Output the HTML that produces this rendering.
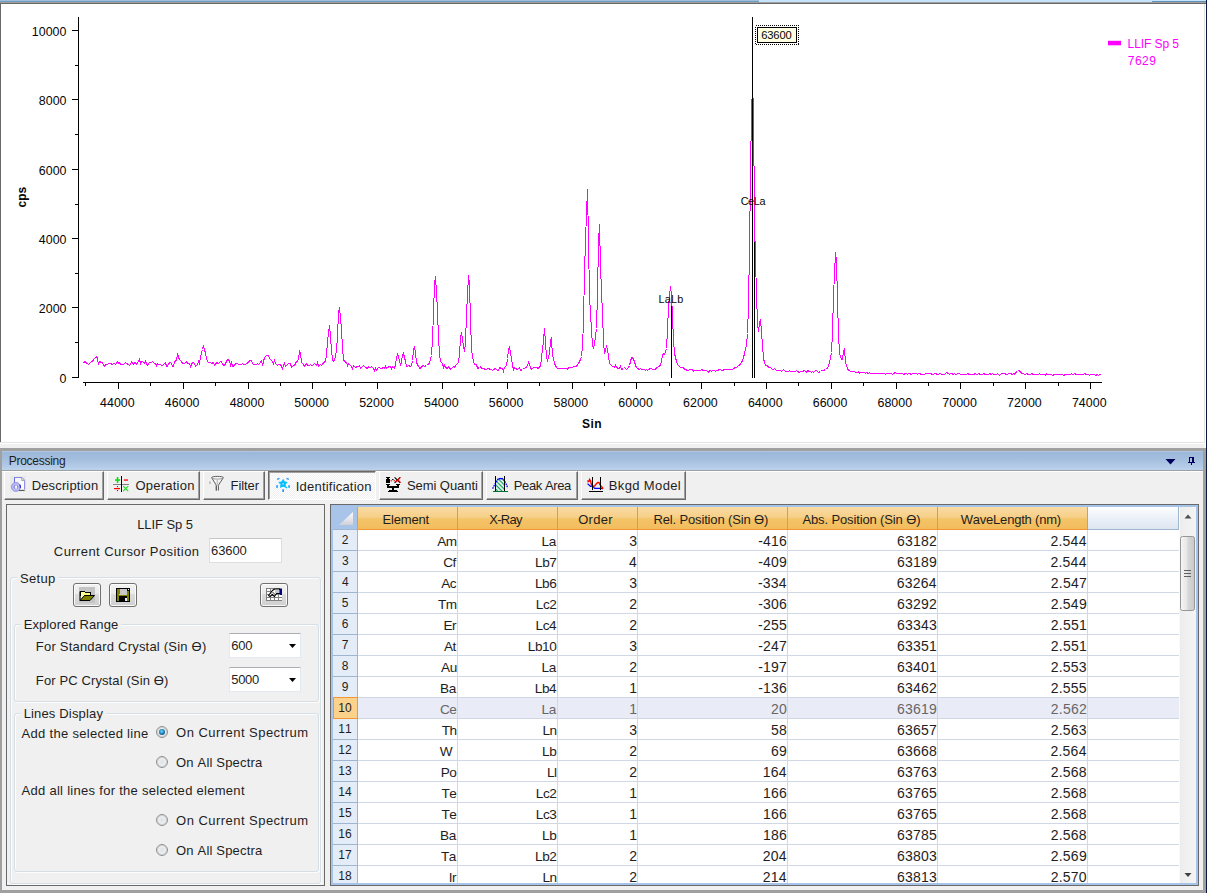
<!DOCTYPE html>
<html><head><meta charset="utf-8"><title>Processing</title>
<style>
html,body{margin:0;padding:0}
body{width:1207px;height:893px;background:#f0f0f0;position:relative;overflow:hidden;font-family:"Liberation Sans",sans-serif;font-size:13px;color:#1e1e1e;font-kerning:none}
.t{position:absolute;white-space:pre;line-height:16px;font-kerning:none}
.a{position:absolute}
.tab{position:absolute;top:471px;height:29px;box-sizing:border-box;background:#f0f0f0;border-top:1px solid #fff;border-left:1px solid #fff;border-right:1px solid #696969;border-bottom:1px solid #696969}
.tab:after{content:"";position:absolute;right:0;bottom:0;left:0;top:0;border-right:1px solid #a0a0a0;border-bottom:1px solid #a0a0a0}
.tabsel{position:absolute;top:471px;height:29px;box-sizing:border-box;border-top:1px solid #696969;border-left:1px solid #696969;border-right:1px solid #fff;border-bottom:1px solid #fff;background:repeating-conic-gradient(#ffffff 0 25%,#f0f0f0 0 50%) 0 0/2px 2px}
.tabsel:after{content:"";position:absolute;right:0;bottom:0;left:0;top:0;border-left:1px solid #a0a0a0;border-top:1px solid #a0a0a0}
.btn{position:absolute;width:28px;height:24px;box-sizing:border-box;border:1px solid #707070;border-radius:3px;background:linear-gradient(#f2f2f2 0,#ebebeb 45%,#dddddd 46%,#cfcfcf 100%);box-shadow:inset 0 0 0 1px rgba(255,255,255,.85)}
.grp{position:absolute;box-sizing:border-box;border:1px solid #d5dfe5;border-radius:3px;box-shadow:inset 1px 1px 0 rgba(255,255,255,.8),1px 1px 0 rgba(255,255,255,.8)}
.edit{position:absolute;box-sizing:border-box;background:#fff;border:1px solid #e3e9ef;border-top-color:#abadb3;border-radius:1px}
.radio{position:absolute;width:12px;height:12px;box-sizing:border-box;border:1px solid #8e8f8f;border-radius:50%;background:radial-gradient(circle at 50% 50%,#dfe2e5 0,#eceef0 50%,#c9cccf 62%,#fbfbfb 75%,#ffffff 100%)}
.radio.on:after{content:"";position:absolute;left:2px;top:2px;width:6px;height:6px;border-radius:50%;background:radial-gradient(circle at 45% 40%,#7fdcfa 0,#2a9bd4 35%,#0f3a60 85%,#0c3052 100%)}
</style></head><body>

<div style="position:absolute;left:0px;top:0px;width:759px;height:1px;background:#a3bcdc;"></div>
<div style="position:absolute;left:759px;top:0px;width:448px;height:1px;background:#c5e3fb;"></div>
<div style="position:absolute;left:0px;top:1px;width:759px;height:1px;background:#6a9fc0;"></div>
<div style="position:absolute;left:759px;top:1px;width:393px;height:1px;background:#c5e3fb;"></div>
<div style="position:absolute;left:1152px;top:1px;width:54px;height:1px;background:#5f90b8;"></div>
<div style="position:absolute;left:0px;top:2px;width:1206px;height:1px;background:#a0a0a0;"></div>
<div style="position:absolute;left:0px;top:3px;width:1206px;height:1px;background:#696969;"></div>
<div style="position:absolute;left:1px;top:4px;width:1203px;height:438px;background:#ffffff;"></div>
<div style="position:absolute;left:0px;top:3px;width:1px;height:439px;background:#696969;"></div>
<div style="position:absolute;left:1204px;top:4px;width:1px;height:439px;background:#e3e3e3;"></div>
<div style="position:absolute;left:1205px;top:4px;width:1px;height:444px;background:#ffffff;"></div>
<div style="position:absolute;left:0px;top:442px;width:1205px;height:1px;background:#e3e3e3;"></div>
<div style="position:absolute;left:0px;top:443px;width:1205px;height:1px;background:#ffffff;"></div>
<div style="position:absolute;left:1206px;top:0px;width:1px;height:893px;background:#0a1840;"></div>
<svg class="a" style="left:0;top:0" width="1207" height="446" viewBox="0 0 1207 446" font-family="Liberation Sans, sans-serif">
<g fill="#000" shape-rendering="crispEdges"><rect x="754" y="242" width="1" height="136"/><rect x="671" y="303" width="1" height="75"/></g>
<polyline fill="none" stroke="#ff00ff" stroke-width="1" shape-rendering="crispEdges" points="83.5,362.5 85.5,361.5 86.5,363.5 87.5,363.5 88.5,364.5 89.5,363.5 91.5,361.5 92.5,361.5 93.5,359.5 94.5,358.5 96.5,356.5 97.5,358.5 98.5,364.5 99.5,361.5 101.5,362.5 102.5,362.5 103.5,365.5 104.5,366.5 105.5,364.5 107.5,364.5 108.5,363.5 109.5,363.5 110.5,363.5 112.5,364.5 113.5,363.5 114.5,363.5 115.5,364.5 117.5,361.5 118.5,363.5 119.5,362.5 120.5,364.5 121.5,364.5 123.5,364.5 124.5,363.5 125.5,362.5 126.5,363.5 128.5,364.5 129.5,365.5 130.5,364.5 131.5,361.5 133.5,364.5 134.5,362.5 135.5,362.5 136.5,364.5 138.5,361.5 139.5,359.5 140.5,363.5 141.5,361.5 142.5,361.5 144.5,363.5 145.5,361.5 146.5,363.5 147.5,365.5 149.5,362.5 150.5,362.5 151.5,362.5 152.5,361.5 154.5,363.5 155.5,363.5 156.5,365.5 157.5,363.5 158.5,364.5 160.5,364.5 161.5,365.5 162.5,365.5 163.5,364.5 165.5,362.5 166.5,366.5 167.5,366.5 168.5,363.5 170.5,362.5 171.5,363.5 172.5,366.5 173.5,366.5 174.5,361.5 176.5,360.5 177.5,353.5 178.5,357.5 179.5,359.5 181.5,361.5 182.5,363.5 183.5,363.5 184.5,363.5 186.5,361.5 187.5,363.5 188.5,363.5 189.5,363.5 190.5,366.5 192.5,362.5 193.5,362.5 194.5,363.5 195.5,366.5 197.5,364.5 198.5,361.5 199.5,363.5 200.5,356.5 202.5,349.5 203.5,345.5 204.5,350.5 205.5,352.5 206.5,359.5 208.5,362.5 209.5,362.5 210.5,362.5 211.5,363.5 213.5,362.5 214.5,365.5 215.5,364.5 216.5,362.5 218.5,363.5 219.5,362.5 220.5,361.5 221.5,361.5 222.5,364.5 224.5,365.5 225.5,363.5 226.5,361.5 227.5,359.5 229.5,360.5 230.5,365.5 231.5,362.5 232.5,366.5 234.5,365.5 235.5,363.5 236.5,363.5 237.5,363.5 238.5,364.5 240.5,364.5 241.5,364.5 242.5,363.5 243.5,364.5 245.5,364.5 246.5,363.5 247.5,363.5 248.5,361.5 250.5,360.5 251.5,360.5 252.5,363.5 253.5,364.5 254.5,364.5 256.5,364.5 257.5,363.5 258.5,364.5 259.5,363.5 261.5,360.5 262.5,365.5 263.5,361.5 264.5,357.5 266.5,355.5 267.5,355.5 268.5,355.5 269.5,358.5 270.5,359.5 272.5,361.5 273.5,363.5 274.5,360.5 275.5,363.5 277.5,365.5 278.5,364.5 279.5,364.5 280.5,364.5 282.5,368.5 283.5,365.5 284.5,363.5 285.5,366.5 286.5,365.5 288.5,363.5 289.5,363.5 290.5,363.5 291.5,367.5 293.5,365.5 294.5,365.5 295.5,363.5 296.5,361.5 298.5,360.5 299.5,350.5 300.5,353.5 301.5,362.5 302.5,363.5 304.5,366.5 305.5,364.5 306.5,363.5 307.5,365.5 309.5,365.5 310.5,364.5 311.5,365.5 312.5,365.5 314.5,363.5 315.5,364.5 316.5,365.5 317.5,362.5 318.5,366.5 320.5,364.5 321.5,365.5 322.5,364.5 323.5,362.5 325.5,361.5 326.5,354.5 327.5,341.5 329.5,325.5 330.5,336.5 331.5,350.5 332.5,359.5 333.5,361.5 334.5,360.5 336.5,350.5 337.5,335.5 338.5,313.5 339.5,307.5 341.5,329.5 342.5,347.5 343.5,359.5 344.5,361.5 346.5,362.5 347.5,365.5 348.5,363.5 349.5,364.5 351.5,366.5 352.5,368.5 353.5,365.5 354.5,366.5 355.5,367.5 357.5,366.5 358.5,366.5 359.5,365.5 360.5,368.5 362.5,366.5 363.5,365.5 364.5,366.5 365.5,367.5 367.5,368.5 368.5,366.5 369.5,367.5 370.5,367.5 371.5,366.5 373.5,368.5 374.5,370.5 375.5,368.5 376.5,370.5 378.5,367.5 379.5,367.5 380.5,368.5 381.5,368.5 383.5,367.5 384.5,368.5 385.5,366.5 386.5,368.5 387.5,367.5 389.5,366.5 390.5,366.5 391.5,368.5 392.5,366.5 394.5,368.5 395.5,364.5 396.5,358.5 397.5,353.5 399.5,360.5 400.5,365.5 401.5,361.5 402.5,355.5 403.5,353.5 405.5,361.5 406.5,366.5 407.5,366.5 408.5,365.5 410.5,366.5 411.5,365.5 412.5,360.5 413.5,350.5 414.5,346.5 416.5,361.5 417.5,365.5 418.5,365.5 419.5,368.5 421.5,367.5 422.5,365.5 423.5,365.5 424.5,366.5 426.5,365.5 427.5,364.5 428.5,364.5 429.5,362.5 431.5,355.5 432.5,338.5 433.5,313.5 434.5,283.5 435.5,276.5 437.5,310.5 438.5,338.5 439.5,353.5 440.5,361.5 442.5,363.5 443.5,367.5 444.5,365.5 445.5,367.5 447.5,368.5 448.5,366.5 449.5,367.5 450.5,369.5 451.5,368.5 453.5,366.5 454.5,367.5 455.5,365.5 456.5,364.5 458.5,362.5 459.5,354.5 460.5,338.5 461.5,332.5 463.5,346.5 464.5,351.5 465.5,343.5 466.5,313.5 468.5,275.5 469.5,283.5 470.5,321.5 471.5,347.5 472.5,357.5 474.5,364.5 475.5,364.5 476.5,364.5 477.5,368.5 479.5,367.5 480.5,366.5 481.5,368.5 482.5,368.5 483.5,368.5 485.5,369.5 486.5,369.5 487.5,368.5 488.5,368.5 490.5,369.5 491.5,369.5 492.5,370.5 493.5,369.5 495.5,368.5 496.5,369.5 497.5,370.5 498.5,370.5 499.5,367.5 501.5,368.5 502.5,368.5 503.5,371.5 504.5,367.5 506.5,365.5 507.5,358.5 508.5,349.5 509.5,346.5 511.5,358.5 512.5,365.5 513.5,369.5 514.5,367.5 515.5,368.5 517.5,369.5 518.5,368.5 519.5,367.5 520.5,370.5 522.5,369.5 523.5,368.5 524.5,368.5 525.5,367.5 527.5,366.5 528.5,362.5 529.5,364.5 530.5,367.5 531.5,369.5 533.5,367.5 534.5,367.5 535.5,367.5 536.5,367.5 538.5,368.5 539.5,366.5 540.5,366.5 541.5,357.5 543.5,340.5 544.5,328.5 545.5,342.5 546.5,357.5 547.5,360.5 549.5,353.5 550.5,340.5 551.5,337.5 551.5,340.5 552.5,354.5 554.5,363.5 555.5,365.5 556.5,367.5 557.5,368.5 559.5,368.5 560.5,368.5 561.5,368.5 562.5,368.5 564.5,368.5 565.5,368.5 566.5,368.5 567.5,369.5 568.5,367.5 570.5,367.5 571.5,367.5 572.5,367.5 573.5,366.5 575.5,366.5 576.5,366.5 577.5,364.5 578.5,363.5 580.5,359.5 581.5,356.5 582.5,346.5 583.5,321.5 584.5,271.5 586.5,212.5 587.5,189.5 588.5,240.5 589.5,296.5 591.5,330.5 592.5,344.5 593.5,348.5 594.5,343.5 596.5,328.5 597.5,292.5 598.5,242.5 599.5,224.5 600.5,266.5 602.5,314.5 603.5,341.5 604.5,353.5 605.5,350.5 606.5,345.5 608.5,355.5 609.5,363.5 610.5,364.5 612.5,366.5 613.5,366.5 614.5,367.5 615.5,365.5 616.5,367.5 618.5,368.5 619.5,368.5 620.5,366.5 621.5,369.5 623.5,368.5 624.5,367.5 625.5,368.5 626.5,369.5 628.5,367.5 629.5,365.5 630.5,361.5 631.5,357.5 632.5,357.5 634.5,361.5 635.5,365.5 636.5,367.5 637.5,368.5 639.5,369.5 640.5,368.5 641.5,369.5 642.5,369.5 644.5,369.5 645.5,370.5 646.5,369.5 647.5,370.5 648.5,369.5 650.5,368.5 651.5,368.5 652.5,369.5 653.5,369.5 655.5,369.5 656.5,367.5 657.5,367.5 658.5,366.5 660.5,365.5 661.5,360.5 662.5,355.5 663.5,353.5 664.5,354.5 666.5,348.5 667.5,330.5 668.5,306.5 670.5,286.5 671.5,294.5 672.5,317.5 673.5,339.5 674.5,353.5 676.5,361.5 677.5,364.5 678.5,365.5 679.5,366.5 680.5,367.5 682.5,367.5 683.5,367.5 684.5,369.5 685.5,369.5 687.5,370.5 688.5,370.5 689.5,369.5 690.5,369.5 692.5,369.5 693.5,371.5 694.5,370.5 695.5,370.5 696.5,370.5 698.5,370.5 699.5,370.5 700.5,370.5 701.5,369.5 703.5,370.5 704.5,370.5 705.5,370.5 706.5,370.5 708.5,372.5 709.5,370.5 710.5,370.5 711.5,371.5 712.5,370.5 714.5,370.5 715.5,371.5 716.5,370.5 717.5,370.5 719.5,369.5 720.5,369.5 721.5,370.5 722.5,370.5 724.5,369.5 725.5,369.5 726.5,369.5 727.5,369.5 728.5,369.5 730.5,369.5 731.5,369.5 732.5,369.5 733.5,368.5 735.5,367.5 736.5,367.5 737.5,366.5 738.5,365.5 740.5,364.5 741.5,361.5 742.5,361.5 743.5,357.5 744.5,353.5 746.5,344.5 747.5,333.5 748.5,305.5 749.5,246.5 751.5,107.5 752.5,90.5 753.5,105.5 754.5,223.5 756.5,294.5 757.5,323.5 758.5,331.5 759.5,322.5 760.5,319.5 762.5,345.5 763.5,358.5 764.5,362.5 765.5,365.5 767.5,365.5 768.5,367.5 769.5,367.5 770.5,367.5 772.5,369.5 773.5,369.5 774.5,368.5 775.5,369.5 776.5,370.5 778.5,370.5 779.5,370.5 780.5,370.5 781.5,371.5 783.5,369.5 784.5,370.5 785.5,371.5 786.5,371.5 788.5,371.5 789.5,370.5 790.5,371.5 791.5,371.5 793.5,371.5 794.5,371.5 795.5,371.5 796.5,370.5 797.5,371.5 799.5,372.5 800.5,371.5 801.5,371.5 802.5,371.5 804.5,370.5 805.5,371.5 806.5,372.5 807.5,370.5 809.5,371.5 810.5,371.5 811.5,372.5 812.5,371.5 813.5,372.5 815.5,370.5 816.5,370.5 817.5,371.5 818.5,372.5 820.5,371.5 821.5,370.5 822.5,370.5 823.5,370.5 825.5,369.5 826.5,368.5 827.5,368.5 828.5,365.5 829.5,362.5 831.5,352.5 832.5,331.5 833.5,295.5 835.5,252.5 836.5,260.5 837.5,300.5 838.5,334.5 839.5,353.5 841.5,359.5 842.5,359.5 843.5,351.5 844.5,348.5 845.5,362.5 847.5,368.5 848.5,370.5 849.5,370.5 850.5,371.5 852.5,371.5 853.5,371.5 854.5,371.5 855.5,372.5 857.5,372.5 858.5,371.5 859.5,373.5 860.5,372.5 861.5,372.5 863.5,372.5 864.5,372.5 865.5,373.5 866.5,372.5 868.5,373.5 869.5,372.5 870.5,373.5 871.5,373.5 873.5,373.5 874.5,373.5 875.5,373.5 876.5,373.5 877.5,373.5 879.5,373.5 880.5,373.5 881.5,373.5 882.5,373.5 884.5,373.5 885.5,374.5 886.5,373.5 887.5,373.5 889.5,373.5 890.5,373.5 891.5,373.5 892.5,374.5 893.5,373.5 895.5,372.5 896.5,373.5 897.5,373.5 898.5,373.5 900.5,373.5 901.5,373.5 902.5,373.5 903.5,374.5 905.5,373.5 906.5,373.5 907.5,374.5 908.5,373.5 909.5,373.5 911.5,374.5 912.5,373.5 913.5,373.5 914.5,373.5 916.5,373.5 917.5,374.5 918.5,373.5 919.5,373.5 921.5,374.5 922.5,374.5 923.5,374.5 924.5,374.5 925.5,373.5 927.5,373.5 928.5,373.5 929.5,373.5 930.5,373.5 932.5,374.5 933.5,374.5 934.5,373.5 935.5,373.5 937.5,374.5 938.5,374.5 939.5,373.5 940.5,373.5 941.5,374.5 943.5,374.5 944.5,374.5 945.5,373.5 946.5,372.5 948.5,373.5 949.5,374.5 950.5,373.5 951.5,373.5 953.5,374.5 954.5,373.5 955.5,374.5 956.5,374.5 957.5,373.5 959.5,373.5 960.5,374.5 961.5,374.5 962.5,374.5 964.5,374.5 965.5,374.5 966.5,374.5 967.5,373.5 969.5,374.5 970.5,374.5 971.5,374.5 972.5,374.5 973.5,374.5 975.5,373.5 976.5,374.5 977.5,374.5 978.5,373.5 980.5,374.5 981.5,374.5 982.5,374.5 983.5,373.5 985.5,374.5 986.5,374.5 987.5,374.5 988.5,374.5 989.5,373.5 991.5,374.5 992.5,373.5 993.5,374.5 994.5,374.5 996.5,374.5 997.5,373.5 998.5,374.5 999.5,375.5 1001.5,373.5 1002.5,373.5 1003.5,373.5 1004.5,373.5 1006.5,374.5 1007.5,374.5 1008.5,373.5 1009.5,373.5 1010.5,373.5 1012.5,374.5 1013.5,373.5 1014.5,374.5 1015.5,372.5 1017.5,371.5 1018.5,370.5 1019.5,370.5 1020.5,372.5 1022.5,373.5 1023.5,373.5 1024.5,374.5 1025.5,374.5 1026.5,373.5 1028.5,374.5 1029.5,374.5 1030.5,374.5 1031.5,373.5 1033.5,374.5 1034.5,374.5 1035.5,374.5 1036.5,374.5 1038.5,374.5 1039.5,373.5 1040.5,374.5 1041.5,374.5 1042.5,374.5 1044.5,374.5 1045.5,375.5 1046.5,373.5 1047.5,374.5 1049.5,374.5 1050.5,374.5 1051.5,374.5 1052.5,375.5 1054.5,374.5 1055.5,374.5 1056.5,374.5 1057.5,374.5 1058.5,374.5 1060.5,374.5 1061.5,374.5 1062.5,374.5 1063.5,375.5 1065.5,374.5 1066.5,374.5 1067.5,374.5 1068.5,374.5 1070.5,374.5 1071.5,373.5 1072.5,374.5 1073.5,374.5 1074.5,373.5 1076.5,374.5 1077.5,374.5 1078.5,374.5 1079.5,374.5 1081.5,374.5 1082.5,374.5 1083.5,374.5 1084.5,373.5 1086.5,374.5 1087.5,374.5 1088.5,374.5 1089.5,375.5 1090.5,374.5 1092.5,374.5 1093.5,374.5 1094.5,374.5 1095.5,375.5 1097.5,374.5 1098.5,375.5 1099.5,374.5 1100.5,374.5"/>
<g fill="#000" shape-rendering="crispEdges">
<rect x="78" y="17" width="1" height="361"/>
<rect x="72" y="377" width="6" height="1"/>
<rect x="75" y="342" width="3" height="1"/>
<rect x="72" y="307" width="6" height="1"/>
<rect x="75" y="273" width="3" height="1"/>
<rect x="72" y="238" width="6" height="1"/>
<rect x="75" y="204" width="3" height="1"/>
<rect x="72" y="169" width="6" height="1"/>
<rect x="75" y="134" width="3" height="1"/>
<rect x="72" y="99" width="6" height="1"/>
<rect x="75" y="65" width="3" height="1"/>
<rect x="72" y="30" width="6" height="1"/>
<rect x="83" y="382" width="1019" height="1"/>
<rect x="118" y="382" width="1" height="7"/>
<rect x="85" y="382" width="1" height="4"/>
<rect x="183" y="382" width="1" height="7"/>
<rect x="150" y="382" width="1" height="4"/>
<rect x="248" y="382" width="1" height="7"/>
<rect x="215" y="382" width="1" height="4"/>
<rect x="312" y="382" width="1" height="7"/>
<rect x="280" y="382" width="1" height="4"/>
<rect x="377" y="382" width="1" height="7"/>
<rect x="345" y="382" width="1" height="4"/>
<rect x="442" y="382" width="1" height="7"/>
<rect x="410" y="382" width="1" height="4"/>
<rect x="507" y="382" width="1" height="7"/>
<rect x="474" y="382" width="1" height="4"/>
<rect x="572" y="382" width="1" height="7"/>
<rect x="539" y="382" width="1" height="4"/>
<rect x="636" y="382" width="1" height="7"/>
<rect x="604" y="382" width="1" height="4"/>
<rect x="701" y="382" width="1" height="7"/>
<rect x="669" y="382" width="1" height="4"/>
<rect x="766" y="382" width="1" height="7"/>
<rect x="734" y="382" width="1" height="4"/>
<rect x="831" y="382" width="1" height="7"/>
<rect x="798" y="382" width="1" height="4"/>
<rect x="896" y="382" width="1" height="7"/>
<rect x="863" y="382" width="1" height="4"/>
<rect x="960" y="382" width="1" height="7"/>
<rect x="928" y="382" width="1" height="4"/>
<rect x="1025" y="382" width="1" height="7"/>
<rect x="993" y="382" width="1" height="4"/>
<rect x="1090" y="382" width="1" height="7"/>
<rect x="1058" y="382" width="1" height="4"/>
<rect x="752" y="17" width="1" height="361"/>
</g>
<rect x="755.5" y="25.5" width="43" height="19" fill="#fff" stroke="#000" stroke-width="1" stroke-dasharray="1 1" shape-rendering="crispEdges"/>
<rect x="757.5" y="27.5" width="39" height="15" fill="#ffffe1" stroke="#000" stroke-width="1" shape-rendering="crispEdges"/>
<rect x="1108" y="40.8" width="13" height="4.5" fill="#ff00ff"/>
</svg>
<div style="color:#060606">
<span class="t" style="left:59.59px;top:371px;font-size:12.4px;letter-spacing:0.050px;">0</span>
<span class="t" style="left:38.75px;top:301px;font-size:12.4px;letter-spacing:0.050px;">2000</span>
<span class="t" style="left:38.75px;top:232px;font-size:12.4px;letter-spacing:0.050px;">4000</span>
<span class="t" style="left:38.75px;top:163px;font-size:12.4px;letter-spacing:0.050px;">6000</span>
<span class="t" style="left:38.75px;top:93px;font-size:12.4px;letter-spacing:0.050px;">8000</span>
<span class="t" style="left:31.80px;top:24px;font-size:12.4px;letter-spacing:0.050px;">10000</span>
<span class="t" style="left:100.06px;top:395px;font-size:12.4px;letter-spacing:0.050px;">44000</span>
<span class="t" style="left:164.86px;top:395px;font-size:12.4px;letter-spacing:0.050px;">46000</span>
<span class="t" style="left:229.66px;top:395px;font-size:12.4px;letter-spacing:0.050px;">48000</span>
<span class="t" style="left:294.35px;top:395px;font-size:12.4px;letter-spacing:0.050px;">50000</span>
<span class="t" style="left:359.15px;top:395px;font-size:12.4px;letter-spacing:0.050px;">52000</span>
<span class="t" style="left:423.95px;top:395px;font-size:12.4px;letter-spacing:0.050px;">54000</span>
<span class="t" style="left:488.75px;top:395px;font-size:12.4px;letter-spacing:0.050px;">56000</span>
<span class="t" style="left:553.55px;top:395px;font-size:12.4px;letter-spacing:0.050px;">58000</span>
<span class="t" style="left:618.29px;top:395px;font-size:12.4px;letter-spacing:0.050px;">60000</span>
<span class="t" style="left:683.09px;top:395px;font-size:12.4px;letter-spacing:0.050px;">62000</span>
<span class="t" style="left:747.89px;top:395px;font-size:12.4px;letter-spacing:0.050px;">64000</span>
<span class="t" style="left:812.69px;top:395px;font-size:12.4px;letter-spacing:0.050px;">66000</span>
<span class="t" style="left:877.49px;top:395px;font-size:12.4px;letter-spacing:0.050px;">68000</span>
<span class="t" style="left:942.28px;top:395px;font-size:12.4px;letter-spacing:0.050px;">70000</span>
<span class="t" style="left:1007.08px;top:395px;font-size:12.4px;letter-spacing:0.050px;">72000</span>
<span class="t" style="left:1071.88px;top:395px;font-size:12.4px;letter-spacing:0.050px;">74000</span>
<span class="t" style="left:581.95px;top:416px;font-size:12px;letter-spacing:0.461px;font-weight:bold;">Sin</span>
<span class="t" style="left:-0.47px;top:-12px;font-size:12px;font-weight:bold;left:0;top:0;transform-origin:0 0;transform:translate(14px,207.5px) rotate(-90deg);">cps</span>
<span class="t" style="left:761.13px;top:27px;font-size:11.2px;letter-spacing:-0.135px;">63600</span>
<span class="t" style="left:1127.62px;top:36px;font-size:12px;letter-spacing:-0.093px;color:#ff00ff;">LLIF Sp 5</span>
<span class="t" style="left:1127.78px;top:53px;font-size:12px;letter-spacing:0.496px;color:#ff00ff;">7629</span>
<span class="t" style="left:740.65px;top:193px;font-size:10.8px;letter-spacing:-0.323px;">CeLa</span>
<span class="t" style="left:658.51px;top:291px;font-size:10.8px;letter-spacing:0.271px;">LaLb</span>
</div><div style="position:absolute;left:0px;top:448px;width:1206px;height:3px;background:#a0a0a0;"></div>
<div style="position:absolute;left:0px;top:448px;width:2px;height:445px;background:#a0a0a0;"></div>
<div style="position:absolute;left:1203px;top:448px;width:3px;height:445px;background:#a0a0a0;"></div>
<div style="position:absolute;left:0px;top:890px;width:1206px;height:3px;background:#a0a0a0;"></div>
<div style="position:absolute;left:2px;top:451px;width:1201px;height:19px;background:linear-gradient(#b9d1ec 0,#9cb7d9 6%,#a3bddd 40%,#b4cce8 85%,#bcd3ed 100%);"></div>
<div style="position:absolute;left:2px;top:470px;width:1201px;height:1px;background:#a0a0a0;"></div>
<span class="t" style="left:8.82px;top:453px;font-size:12px;letter-spacing:-0.289px;">Processing</span>
<svg class="a" style="left:1160px;top:452px" width="42" height="18" viewBox="0 0 42 18"><path d="M5.5 7h10l-5 5.5z" fill="#00005a"/><g fill="#00005a" shape-rendering="crispEdges"><rect x="29" y="5" width="5" height="1"/><rect x="29" y="5" width="1" height="5"/><rect x="32" y="5" width="2" height="5"/><rect x="28" y="10" width="7" height="1"/><rect x="31" y="11" width="1" height="2"/></g></svg>
<div style="position:absolute;left:2px;top:471px;width:1201px;height:1px;background:#ffffff;"></div>
<div class="tab" style="left:4px;width:100px"></div>
<div class="tab" style="left:107px;width:93px"></div>
<div class="tab" style="left:203px;width:62px"></div>
<div class="tabsel" style="left:268px;width:108px"></div>
<div class="tab" style="left:379px;width:104px"></div>
<div class="tab" style="left:486px;width:92px"></div>
<div class="tab" style="left:581px;width:105px"></div>
<span class="t" style="left:31.63px;top:478px;font-size:13px;letter-spacing:0.159px;">Description</span>
<span class="t" style="left:135.38px;top:478px;font-size:13px;letter-spacing:0.246px;">Operation</span>
<span class="t" style="left:230.53px;top:478px;font-size:13px;letter-spacing:-0.061px;">Filter</span>
<span class="t" style="left:295.80px;top:479px;font-size:13px;letter-spacing:0.204px;">Identification</span>
<span class="t" style="left:406.91px;top:478px;font-size:13px;letter-spacing:-0.057px;">Semi Quanti</span>
<span class="t" style="left:513.83px;top:478px;font-size:13px;letter-spacing:-0.417px;">Peak Area</span>
<span class="t" style="left:608.73px;top:478px;font-size:13px;letter-spacing:0.376px;">Bkgd Model</span>
<svg class="a" style="left:10px;top:476px" width="16" height="16" viewBox="0 0 16 16"><rect x="0" y="0" width="16" height="16" fill="#e9e9e9"/><path d="M4.5 1.5h7.5l3 3v9.5h-10.5z" fill="#f6f6f6"/><path d="M9 14v-9h5.5v9z" fill="#ffffff"/><path d="M4.5 8v-6.5h7.5l2.6 2.8v9.2" fill="none" stroke="#8585e6" stroke-width="1"/><path d="M4.5 1.5v6" stroke="#6a6ae0" stroke-width="1"/><path d="M11.8 2v2.6h2.4" fill="none" stroke="#a0a0a8" stroke-width="1"/><path d="M8 14.4h6.6" stroke="#5a5a5a" stroke-width="1.2"/><circle cx="5.9" cy="10.9" r="4.5" fill="#a3a3ea" stroke="#9a9ae4" stroke-width="1"/><circle cx="5.9" cy="10.9" r="3.2" fill="none" stroke="#c8c8f8" stroke-width="1"/><circle cx="5.9" cy="11" r="2.3" fill="#9494dc"/><path d="M9.7 8.6a4.4 4.4 0 0 1 .6 3.6" fill="none" stroke="#2a2ac8" stroke-width="1.1"/><rect x="5.2" y="9.5" width="1.7" height="3.2" fill="#fff"/></svg>
<svg class="a" style="left:113px;top:476px" width="16" height="16" viewBox="0 0 16 16"><g shape-rendering="crispEdges"><rect x="0" y="8" width="16" height="1" fill="#808080"/><rect x="8" y="0" width="1" height="16" fill="#000"/></g><rect x="2" y="3.3" width="5" height="1.5" fill="#00e000"/><rect x="3.8" y="1" width="1.5" height="6" fill="#00e000"/><rect x="10.8" y="3.3" width="4.2" height="1.5" fill="#ff2020"/><rect x="1" y="12" width="6" height="1.2" fill="#ff0000"/><rect x="3.9" y="10" width="1.2" height="1.2" fill="#ff0000"/><rect x="3.9" y="14" width="1.2" height="1.2" fill="#ff0000"/><path d="M10.2 10.2l5 5M15.2 10.2l-5 5" stroke="#20e020" stroke-width="1.1"/></svg>
<svg class="a" style="left:209px;top:475px" width="16" height="16" viewBox="0 0 16 16"><path d="M2.6 2.6c0-1.6 11.8-1.6 11.8 0l-5 7.6v5.3M7.3 15.5v-5.3z" fill="#f8f8f8" stroke="#5a5a5a" stroke-width="1" stroke-linejoin="round"/><path d="M2.6 2.6l4.7 7.6" stroke="#5a5a5a" stroke-width="1"/><path d="M3.4 3.4c2 .9 8 .9 10.2 0" fill="none" stroke="#8a8a8a" stroke-width=".9"/><path d="M8.4 4.6v6.4" stroke="#c4c4c4" stroke-width="1.6"/><path d="M1 6.4v2.6" stroke="#808080" stroke-width="0.8"/></svg>
<svg class="a" style="left:275px;top:477px" width="16" height="16" viewBox="0 0 16 16"><path d="M8.2 2.4l1.2 2.4 2.8.5-1.9 2 .5 3-2.7-1-2.7 1.1.5-2.9-2.1-2.3 2.7-.2z" fill="#00bfff" stroke="#00bfff" stroke-width=".8" stroke-linejoin="round"/><circle cx="8.1" cy="6.9" r="0.8" fill="#e0d8ff"/><g fill="#2a98ff"><rect x="2" y="1.2" width="2.6" height="1.4" transform="rotate(-25 3.3 1.9)"/><rect x="11.4" y="1.2" width="2.6" height="1.4" transform="rotate(25 12.7 1.9)"/><rect x="1.2" y="8.2" width="1.7" height="2.6"/><rect x="13.2" y="8.2" width="1.7" height="2.6" fill="#20a8ff"/><rect x="7.3" y="12.2" width="1.7" height="2.8"/><circle cx="11.5" cy="10.6" r="0.8" fill="#00bfff"/></g></svg>
<svg class="a" style="left:385px;top:476px" width="16" height="16" viewBox="0 0 16 16"><g fill="#000" shape-rendering="crispEdges"><rect x="1" y="1" width="4" height="1"/><rect x="2" y="2" width="2" height="1"/><rect x="1" y="3" width="4" height="4"/><rect x="1" y="8" width="4" height="1"/><rect x="11" y="8" width="4" height="1"/><rect x="2" y="9" width="2" height="1"/><rect x="12" y="9" width="2" height="1"/><rect x="2" y="10" width="12" height="2"/><rect x="7" y="12" width="2" height="2"/><rect x="4" y="14" width="8" height="1"/><rect x="3" y="15" width="10" height="1"/></g><path d="M9.6 1.3l5.6 5.6M15.2 1.3l-5.6 5.6" stroke="#000" stroke-width="1.1"/><path d="M10.4 6.4l5-5" stroke="#ff0000" stroke-width="1.1"/><path d="M13 4l2.6 2.6" stroke="#ff0000" stroke-width="1.1"/><path d="M7 3.6h1.6" stroke="#000" stroke-width="1"/><circle cx="6.2" cy="4.8" r=".7" fill="#f00"/><circle cx="9.3" cy="4.8" r=".7" fill="#f00"/></svg>
<svg class="a" style="left:492px;top:476px" width="16" height="16" viewBox="0 0 16 16"><defs><pattern id="hp" width="3" height="3" patternUnits="userSpaceOnUse" patternTransform="rotate(45)"><rect width="3" height="3" fill="#fff"/><rect width="3" height="1.3" fill="#10a060"/></pattern></defs><path d="M4 4.2l1.6-1.8h4.4l2 1.8v11H4z" fill="url(#hp)"/><path d="M.6 12.6l2.4-4.6 2-3.4 1.6-2h4.2l1.6 2.2 1.6 3 1.8 4.2" fill="none" stroke="#0000ff" stroke-width="1.3" stroke-dasharray="1.6 .8"/><path d="M6.6 2.6h4.2" stroke="#0000ff" stroke-width="1.3"/><g shape-rendering="crispEdges"><rect x="3" y="0" width="1" height="15.5" fill="#000"/><rect x="12" y="0" width="1" height="15.5" fill="#000"/><rect x="1" y="15" width="15" height="1" fill="#007030"/></g></svg>
<svg class="a" style="left:586px;top:476px" width="18" height="16" viewBox="0 0 18 16"><path d="M1.5 7.6l3 2.7h2.5l1.6 2h6.6l1.8.6" fill="none" stroke="#0000ff" stroke-width="1.2"/><path d="M1.6 4.4l.6 1.2 1-.4.4-1.7 1 1.6.5 2.2.7 2.6 1.2.6 1.6-.6 2-2.4 1.2-1.1 1.1.1.9 2 1.4 2 1.2.9.2 1.6" fill="none" stroke="#ff0000" stroke-width="1.4"/><g shape-rendering="crispEdges"><rect x="6" y="1" width="1" height="13" fill="#000"/><rect x="14" y="1" width="1" height="13" fill="#000"/><rect x="3" y="15" width="14" height="1" fill="#000"/></g></svg>
<div class="a" style="left:6px;top:504px;width:319px;height:382px;box-sizing:border-box;border:1px solid #696969"></div>
<span class="t" style="left:137.13px;top:517px;font-size:13px;letter-spacing:-0.069px;">LLIF Sp 5</span>
<span class="t" style="left:53.84px;top:544px;font-size:13px;letter-spacing:0.426px;">Current Cursor Position</span>
<div class="edit" style="left:209px;top:538px;width:73px;height:25px;border-color:#dedede;border-top-color:#c6c6c6"></div>
<span class="t" style="left:211.04px;top:543px;font-size:13px;letter-spacing:-0.095px;">63600</span>
<div class="grp" style="left:10px;top:577px;width:311px;height:307px"></div>
<div style="position:absolute;left:17px;top:570px;width:41px;height:16px;background:#f0f0f0;"></div>
<span class="t" style="left:20.01px;top:571px;font-size:13px;letter-spacing:0.291px;">Setup</span>
<div class="btn" style="left:73px;top:583px"></div>
<div class="btn" style="left:109px;top:583px"></div>
<div class="btn" style="left:260px;top:583px"></div>
<svg class="a" style="left:79px;top:587px" width="16" height="16" viewBox="0 0 16 16"><rect width="16" height="16" fill="#c4c4c4"/><g shape-rendering="crispEdges"><path d="M1 4h4l1 1h5v3H1z" fill="#ffff80" stroke="#000" stroke-width="1"/><rect x="1.5" y="5" width="3" height="8" fill="#ffffa0"/></g><path d="M1 13.5h10l4.5-5h-10z" fill="#808000" stroke="#000" stroke-width="1" stroke-linejoin="miter"/><path d="M1 4.5v9" stroke="#000" stroke-width="1"/></svg>
<svg class="a" style="left:115px;top:587px" width="16" height="16" viewBox="0 0 16 16"><rect width="16" height="16" fill="none"/><g shape-rendering="crispEdges"><rect x="1" y="1" width="14" height="14" fill="#000"/><rect x="2" y="2" width="2" height="12" fill="#808000"/><rect x="12" y="4" width="2" height="10" fill="#808000"/><rect x="4" y="2" width="8" height="6" fill="#c8c8c8"/><rect x="4" y="8" width="8" height="1" fill="#808000"/><rect x="10" y="11" width="2" height="3" fill="#e8e8ff"/><rect x="13" y="2" width="1" height="1" fill="#fff"/><rect x="4" y="2" width="1" height="5" fill="#8060a0"/></g></svg>
<svg class="a" style="left:266px;top:587px" width="16" height="16" viewBox="0 0 16 16"><g shape-rendering="crispEdges"><rect x="0" y="1" width="16" height="13" fill="#808080"/><rect x="1" y="2" width="3" height="2" fill="#fff"/><rect x="1" y="5" width="3" height="2" fill="#fff"/><rect x="1" y="8" width="3" height="2" fill="#fff"/><rect x="1" y="11" width="3" height="2" fill="#fff"/><rect x="5" y="2" width="3" height="2" fill="#fff"/><rect x="5" y="5" width="3" height="2" fill="#fff"/><rect x="5" y="8" width="3" height="2" fill="#fff"/><rect x="5" y="11" width="3" height="2" fill="#fff"/><rect x="9" y="2" width="3" height="2" fill="#fff"/><rect x="9" y="5" width="3" height="2" fill="#fff"/><rect x="9" y="8" width="3" height="2" fill="#fff"/><rect x="9" y="11" width="3" height="2" fill="#fff"/><rect x="13" y="2" width="3" height="2" fill="#fff"/><rect x="13" y="5" width="3" height="2" fill="#fff"/><rect x="13" y="8" width="3" height="2" fill="#fff"/><rect x="13" y="11" width="3" height="2" fill="#fff"/><rect x="14" y="2" width="2" height="6" fill="#000090"/></g><path d="M2.5 8.5l4-5 2-1.5h5v4.5h-3l-2 3-2-2-2.5 2z" fill="#fff" stroke="#000" stroke-width="1.1"/><path d="M5 6.5l3 3M6.5 5l3 3" stroke="#000" stroke-width=".8"/><rect x="9" y="3" width="4.5" height="3" fill="#c8c8c8"/></svg>
<div class="grp" style="left:14px;top:624px;width:305px;height:78px"></div>
<div style="position:absolute;left:21px;top:616px;width:100px;height:16px;background:#f0f0f0;"></div>
<span class="t" style="left:23.63px;top:617px;font-size:13px;letter-spacing:0.109px;">Explored Range</span>
<span class="t" style="left:35.83px;top:639px;font-size:13px;letter-spacing:0.210px;">For Standard Crystal (Sin Ө)</span>
<span class="t" style="left:35.83px;top:673px;font-size:13px;letter-spacing:0.117px;">For PC Crystal (Sin Ө)</span>
<div class="edit" style="left:229px;top:633px;width:72px;height:25px"></div>
<span class="t" style="left:231.14px;top:638px;font-size:13px;letter-spacing:-0.111px;">600</span>
<svg class="a" style="left:288px;top:643px" width="10" height="6" viewBox="0 0 10 6"><path d="M1 1h7l-3.5 4z" fill="#000"/></svg>
<div class="edit" style="left:229px;top:667px;width:72px;height:25px"></div>
<span class="t" style="left:231.28px;top:672px;font-size:13px;letter-spacing:-0.331px;">5000</span>
<svg class="a" style="left:288px;top:677px" width="10" height="6" viewBox="0 0 10 6"><path d="M1 1h7l-3.5 4z" fill="#000"/></svg>
<div class="grp" style="left:14px;top:713px;width:305px;height:159px"></div>
<div style="position:absolute;left:21px;top:705px;width:85px;height:16px;background:#f0f0f0;"></div>
<span class="t" style="left:23.63px;top:706px;font-size:13px;letter-spacing:0.165px;">Lines Display</span>
<span class="t" style="left:21.57px;top:726px;font-size:13px;letter-spacing:0.300px;">Add the selected line</span>
<span class="t" style="left:21.57px;top:783px;font-size:13px;letter-spacing:0.283px;">Add all lines for the selected element</span>
<div class="radio on" style="left:156px;top:726px"></div>
<span class="t" style="left:176.08px;top:725px;font-size:13px;letter-spacing:0.463px;">On Current Spectrum</span>
<div class="radio" style="left:156px;top:756px"></div>
<span class="t" style="left:176.08px;top:755px;font-size:13px;letter-spacing:0.177px;">On All Spectra</span>
<div class="radio" style="left:156px;top:814px"></div>
<span class="t" style="left:176.08px;top:813px;font-size:13px;letter-spacing:0.463px;">On Current Spectrum</span>
<div class="radio" style="left:156px;top:844px"></div>
<span class="t" style="left:176.08px;top:843px;font-size:13px;letter-spacing:0.177px;">On All Spectra</span><div class="a" style="left:330px;top:504px;width:869px;height:382px;box-sizing:border-box;border:1px solid #696969;background:#a6c3ea"></div>
<div style="position:absolute;left:333px;top:507px;width:863px;height:376px;background:#ffffff;"></div>
<div style="position:absolute;left:333px;top:507px;width:24px;height:22px;background:#a9c4e9;"></div>
<svg class="a" style="left:333px;top:507px" width="24" height="22" viewBox="0 0 24 22"><defs><linearGradient id="cg" x1="0" y1="0" x2="0" y2="1"><stop offset="0" stop-color="#fff"/><stop offset="1" stop-color="#d0d0d8"/></linearGradient></defs><path d="M20 5v13H6z" fill="url(#cg)"/></svg>
<div style="position:absolute;left:357px;top:507px;width:1px;height:23px;background:#8fb1e0;"></div>
<div style="position:absolute;left:333px;top:529px;width:24px;height:1px;background:#9eb6ce;"></div>
<div style="position:absolute;left:358px;top:507px;width:99px;height:22px;background:linear-gradient(#f9dba4 0,#f7d089 45%,#f4c468 55%,#f2bc5c 100%);"></div>
<div style="position:absolute;left:457px;top:507px;width:1px;height:22px;background:#f29536;"></div>
<div style="position:absolute;left:458px;top:507px;width:99px;height:22px;background:linear-gradient(#f9dba4 0,#f7d089 45%,#f4c468 55%,#f2bc5c 100%);"></div>
<div style="position:absolute;left:557px;top:507px;width:1px;height:22px;background:#f29536;"></div>
<div style="position:absolute;left:558px;top:507px;width:79px;height:22px;background:linear-gradient(#f9dba4 0,#f7d089 45%,#f4c468 55%,#f2bc5c 100%);"></div>
<div style="position:absolute;left:637px;top:507px;width:1px;height:22px;background:#f29536;"></div>
<div style="position:absolute;left:638px;top:507px;width:149px;height:22px;background:linear-gradient(#f9dba4 0,#f7d089 45%,#f4c468 55%,#f2bc5c 100%);"></div>
<div style="position:absolute;left:787px;top:507px;width:1px;height:22px;background:#f29536;"></div>
<div style="position:absolute;left:788px;top:507px;width:149px;height:22px;background:linear-gradient(#f9dba4 0,#f7d089 45%,#f4c468 55%,#f2bc5c 100%);"></div>
<div style="position:absolute;left:937px;top:507px;width:1px;height:22px;background:#f29536;"></div>
<div style="position:absolute;left:938px;top:507px;width:149px;height:22px;background:linear-gradient(#f9dba4 0,#f7d089 45%,#f4c468 55%,#f2bc5c 100%);"></div>
<div style="position:absolute;left:1087px;top:507px;width:1px;height:22px;background:#f29536;"></div>
<div style="position:absolute;left:357px;top:507px;width:1px;height:22px;background:#f29536;"></div>
<div style="position:absolute;left:358px;top:529px;width:730px;height:1px;background:#f29536;"></div>
<div style="position:absolute;left:1088px;top:507px;width:90px;height:22px;background:linear-gradient(#fdfeff 0,#edf2f9 45%,#dde5f0 100%);"></div>
<div style="position:absolute;left:1088px;top:529px;width:91px;height:1px;background:#9eb6ce;"></div>
<div style="position:absolute;left:1178px;top:507px;width:1px;height:22px;background:#9eb6ce;"></div>
<span class="t" style="left:382.53px;top:512px;font-size:13px;letter-spacing:-0.171px;">Element</span>
<span class="t" style="left:489.21px;top:512px;font-size:13px;letter-spacing:-0.700px;">X-Ray</span>
<span class="t" style="left:578.18px;top:512px;font-size:13px;letter-spacing:0.325px;">Order</span>
<span class="t" style="left:653.43px;top:512px;font-size:13px;letter-spacing:-0.144px;">Rel. Position (Sin Ө)</span>
<span class="t" style="left:802.47px;top:512px;font-size:13px;letter-spacing:-0.131px;">Abs. Position (Sin Ө)</span>
<span class="t" style="left:960.64px;top:512px;font-size:13px;letter-spacing:-0.197px;">WaveLength (nm)</span>
<div style="position:absolute;left:333px;top:530px;width:24px;height:353px;background:#e4ecf7;"></div>
<div style="position:absolute;left:357px;top:530px;width:1px;height:353px;background:#9eb6ce;"></div>
<div style="position:absolute;left:358px;top:698px;width:821px;height:20px;background:#e9ecf6;"></div>
<div style="position:absolute;left:333px;top:697px;width:25px;height:22px;background:#f29536;"></div>
<div style="position:absolute;left:334px;top:698px;width:23px;height:20px;background:#fbd28c;"></div>
<div style="position:absolute;left:358px;top:550px;width:821px;height:1px;background:#d0d7e5;"></div>
<div style="position:absolute;left:333px;top:550px;width:24px;height:1px;background:#9eb6ce;"></div>
<div style="position:absolute;left:358px;top:571px;width:821px;height:1px;background:#d0d7e5;"></div>
<div style="position:absolute;left:333px;top:571px;width:24px;height:1px;background:#9eb6ce;"></div>
<div style="position:absolute;left:358px;top:592px;width:821px;height:1px;background:#d0d7e5;"></div>
<div style="position:absolute;left:333px;top:592px;width:24px;height:1px;background:#9eb6ce;"></div>
<div style="position:absolute;left:358px;top:613px;width:821px;height:1px;background:#d0d7e5;"></div>
<div style="position:absolute;left:333px;top:613px;width:24px;height:1px;background:#9eb6ce;"></div>
<div style="position:absolute;left:358px;top:634px;width:821px;height:1px;background:#d0d7e5;"></div>
<div style="position:absolute;left:333px;top:634px;width:24px;height:1px;background:#9eb6ce;"></div>
<div style="position:absolute;left:358px;top:655px;width:821px;height:1px;background:#d0d7e5;"></div>
<div style="position:absolute;left:333px;top:655px;width:24px;height:1px;background:#9eb6ce;"></div>
<div style="position:absolute;left:358px;top:676px;width:821px;height:1px;background:#d0d7e5;"></div>
<div style="position:absolute;left:333px;top:676px;width:24px;height:1px;background:#9eb6ce;"></div>
<div style="position:absolute;left:358px;top:697px;width:821px;height:1px;background:#d0d7e5;"></div>
<div style="position:absolute;left:358px;top:718px;width:821px;height:1px;background:#d0d7e5;"></div>
<div style="position:absolute;left:358px;top:739px;width:821px;height:1px;background:#d0d7e5;"></div>
<div style="position:absolute;left:333px;top:739px;width:24px;height:1px;background:#9eb6ce;"></div>
<div style="position:absolute;left:358px;top:760px;width:821px;height:1px;background:#d0d7e5;"></div>
<div style="position:absolute;left:333px;top:760px;width:24px;height:1px;background:#9eb6ce;"></div>
<div style="position:absolute;left:358px;top:781px;width:821px;height:1px;background:#d0d7e5;"></div>
<div style="position:absolute;left:333px;top:781px;width:24px;height:1px;background:#9eb6ce;"></div>
<div style="position:absolute;left:358px;top:802px;width:821px;height:1px;background:#d0d7e5;"></div>
<div style="position:absolute;left:333px;top:802px;width:24px;height:1px;background:#9eb6ce;"></div>
<div style="position:absolute;left:358px;top:823px;width:821px;height:1px;background:#d0d7e5;"></div>
<div style="position:absolute;left:333px;top:823px;width:24px;height:1px;background:#9eb6ce;"></div>
<div style="position:absolute;left:358px;top:844px;width:821px;height:1px;background:#d0d7e5;"></div>
<div style="position:absolute;left:333px;top:844px;width:24px;height:1px;background:#9eb6ce;"></div>
<div style="position:absolute;left:358px;top:865px;width:821px;height:1px;background:#d0d7e5;"></div>
<div style="position:absolute;left:333px;top:865px;width:24px;height:1px;background:#9eb6ce;"></div>
<div style="position:absolute;left:457px;top:530px;width:1px;height:353px;background:#d0d7e5;"></div>
<div style="position:absolute;left:557px;top:530px;width:1px;height:353px;background:#d0d7e5;"></div>
<div style="position:absolute;left:637px;top:530px;width:1px;height:353px;background:#d0d7e5;"></div>
<div style="position:absolute;left:787px;top:530px;width:1px;height:353px;background:#d0d7e5;"></div>
<div style="position:absolute;left:937px;top:530px;width:1px;height:353px;background:#d0d7e5;"></div>
<div style="position:absolute;left:1087px;top:530px;width:1px;height:353px;background:#d0d7e5;"></div>
<span class="t" style="left:341.86px;top:532px;font-size:12px;">2</span>
<span class="t" style="left:437.25px;top:534px;font-size:13.6px;letter-spacing:-0.450px;">Am</span>
<span class="t" style="left:541.52px;top:534px;font-size:13.6px;letter-spacing:-0.450px;">La</span>
<span class="t" style="left:629.23px;top:533px;font-size:14px;letter-spacing:0.220px;">3</span>
<span class="t" style="left:758.13px;top:533px;font-size:14px;letter-spacing:0.220px;">-416</span>
<span class="t" style="left:897.09px;top:533px;font-size:14px;letter-spacing:0.220px;">63182</span>
<span class="t" style="left:1050.50px;top:533px;font-size:14px;letter-spacing:0.220px;">2.544</span>
<span class="t" style="left:341.90px;top:553px;font-size:12px;">3</span>
<span class="t" style="left:443.13px;top:555px;font-size:13.6px;letter-spacing:-0.450px;">Cf</span>
<span class="t" style="left:535.09px;top:555px;font-size:13.6px;letter-spacing:-0.450px;">Lb7</span>
<span class="t" style="left:629.02px;top:554px;font-size:14px;letter-spacing:0.220px;">4</span>
<span class="t" style="left:758.18px;top:554px;font-size:14px;letter-spacing:0.220px;">-409</span>
<span class="t" style="left:897.05px;top:554px;font-size:14px;letter-spacing:0.220px;">63189</span>
<span class="t" style="left:1050.50px;top:554px;font-size:14px;letter-spacing:0.220px;">2.544</span>
<span class="t" style="left:341.90px;top:574px;font-size:12px;">4</span>
<span class="t" style="left:441.24px;top:576px;font-size:13.6px;letter-spacing:-0.450px;">Ac</span>
<span class="t" style="left:535.01px;top:576px;font-size:13.6px;letter-spacing:-0.450px;">Lb6</span>
<span class="t" style="left:629.23px;top:575px;font-size:14px;letter-spacing:0.220px;">3</span>
<span class="t" style="left:757.93px;top:575px;font-size:14px;letter-spacing:0.220px;">-334</span>
<span class="t" style="left:896.80px;top:575px;font-size:14px;letter-spacing:0.220px;">63264</span>
<span class="t" style="left:1050.79px;top:575px;font-size:14px;letter-spacing:0.220px;">2.547</span>
<span class="t" style="left:341.87px;top:595px;font-size:12px;">5</span>
<span class="t" style="left:438.01px;top:597px;font-size:13.6px;letter-spacing:-0.450px;">Tm</span>
<span class="t" style="left:535.86px;top:597px;font-size:13.6px;letter-spacing:-0.450px;">Lc2</span>
<span class="t" style="left:629.32px;top:596px;font-size:14px;letter-spacing:0.220px;">2</span>
<span class="t" style="left:758.13px;top:596px;font-size:14px;letter-spacing:0.220px;">-306</span>
<span class="t" style="left:897.09px;top:596px;font-size:14px;letter-spacing:0.220px;">63292</span>
<span class="t" style="left:1050.75px;top:596px;font-size:14px;letter-spacing:0.220px;">2.549</span>
<span class="t" style="left:341.82px;top:616px;font-size:12px;">6</span>
<span class="t" style="left:443.38px;top:618px;font-size:13.6px;letter-spacing:-0.450px;">Er</span>
<span class="t" style="left:535.57px;top:618px;font-size:13.6px;letter-spacing:-0.450px;">Lc4</span>
<span class="t" style="left:629.32px;top:617px;font-size:14px;letter-spacing:0.220px;">2</span>
<span class="t" style="left:758.11px;top:617px;font-size:14px;letter-spacing:0.220px;">-255</span>
<span class="t" style="left:897.00px;top:617px;font-size:14px;letter-spacing:0.220px;">63343</span>
<span class="t" style="left:1050.77px;top:617px;font-size:14px;letter-spacing:0.220px;">2.551</span>
<span class="t" style="left:341.86px;top:637px;font-size:12px;">7</span>
<span class="t" style="left:444.00px;top:639px;font-size:13.6px;letter-spacing:-0.450px;">At</span>
<span class="t" style="left:527.83px;top:639px;font-size:13.6px;letter-spacing:-0.450px;">Lb10</span>
<span class="t" style="left:629.23px;top:638px;font-size:14px;letter-spacing:0.220px;">3</span>
<span class="t" style="left:758.22px;top:638px;font-size:14px;letter-spacing:0.220px;">-247</span>
<span class="t" style="left:897.07px;top:638px;font-size:14px;letter-spacing:0.220px;">63351</span>
<span class="t" style="left:1050.77px;top:638px;font-size:14px;letter-spacing:0.220px;">2.551</span>
<span class="t" style="left:341.86px;top:658px;font-size:12px;">8</span>
<span class="t" style="left:441.02px;top:660px;font-size:13.6px;letter-spacing:-0.450px;">Au</span>
<span class="t" style="left:541.52px;top:660px;font-size:13.6px;letter-spacing:-0.450px;">La</span>
<span class="t" style="left:629.32px;top:659px;font-size:14px;letter-spacing:0.220px;">2</span>
<span class="t" style="left:758.22px;top:659px;font-size:14px;letter-spacing:0.220px;">-197</span>
<span class="t" style="left:897.07px;top:659px;font-size:14px;letter-spacing:0.220px;">63401</span>
<span class="t" style="left:1050.70px;top:659px;font-size:14px;letter-spacing:0.220px;">2.553</span>
<span class="t" style="left:341.87px;top:679px;font-size:12px;">9</span>
<span class="t" style="left:440.12px;top:681px;font-size:13.6px;letter-spacing:-0.450px;">Ba</span>
<span class="t" style="left:534.81px;top:681px;font-size:13.6px;letter-spacing:-0.450px;">Lb4</span>
<span class="t" style="left:629.30px;top:680px;font-size:14px;letter-spacing:0.220px;">1</span>
<span class="t" style="left:758.13px;top:680px;font-size:14px;letter-spacing:0.220px;">-136</span>
<span class="t" style="left:897.09px;top:680px;font-size:14px;letter-spacing:0.220px;">63462</span>
<span class="t" style="left:1050.67px;top:680px;font-size:14px;letter-spacing:0.220px;">2.555</span>
<span class="t" style="left:338.30px;top:700px;font-size:12px;">10</span>
<span class="t" style="left:439.97px;top:702px;font-size:13.6px;letter-spacing:-0.450px;color:#666;">Ce</span>
<span class="t" style="left:541.52px;top:702px;font-size:13.6px;letter-spacing:-0.450px;color:#666;">La</span>
<span class="t" style="left:629.30px;top:701px;font-size:14px;letter-spacing:0.220px;color:#666;">1</span>
<span class="t" style="left:770.95px;top:701px;font-size:14px;letter-spacing:0.220px;color:#666;">20</span>
<span class="t" style="left:897.05px;top:701px;font-size:14px;letter-spacing:0.220px;color:#666;">63619</span>
<span class="t" style="left:1050.79px;top:701px;font-size:14px;letter-spacing:0.220px;color:#666;">2.562</span>
<span class="t" style="left:338.36px;top:721px;font-size:12px;">11</span>
<span class="t" style="left:441.76px;top:723px;font-size:13.6px;letter-spacing:-0.450px;">Th</span>
<span class="t" style="left:542.41px;top:723px;font-size:13.6px;letter-spacing:-0.450px;">Ln</span>
<span class="t" style="left:629.23px;top:722px;font-size:14px;letter-spacing:0.220px;">3</span>
<span class="t" style="left:771.02px;top:722px;font-size:14px;letter-spacing:0.220px;">58</span>
<span class="t" style="left:897.09px;top:722px;font-size:14px;letter-spacing:0.220px;">63657</span>
<span class="t" style="left:1050.70px;top:722px;font-size:14px;letter-spacing:0.220px;">2.563</span>
<span class="t" style="left:338.37px;top:742px;font-size:12px;">12</span>
<span class="t" style="left:439.81px;top:744px;font-size:13.6px;letter-spacing:-0.450px;">W</span>
<span class="t" style="left:542.09px;top:744px;font-size:13.6px;letter-spacing:-0.450px;">Lb</span>
<span class="t" style="left:629.32px;top:743px;font-size:14px;letter-spacing:0.220px;">2</span>
<span class="t" style="left:771.07px;top:743px;font-size:14px;letter-spacing:0.220px;">69</span>
<span class="t" style="left:897.00px;top:743px;font-size:14px;letter-spacing:0.220px;">63668</span>
<span class="t" style="left:1050.50px;top:743px;font-size:14px;letter-spacing:0.220px;">2.564</span>
<span class="t" style="left:338.33px;top:763px;font-size:12px;">13</span>
<span class="t" style="left:440.69px;top:765px;font-size:13.6px;letter-spacing:-0.450px;">Po</span>
<span class="t" style="left:546.97px;top:765px;font-size:13.6px;letter-spacing:-0.450px;">Ll</span>
<span class="t" style="left:629.32px;top:764px;font-size:14px;letter-spacing:0.220px;">2</span>
<span class="t" style="left:762.81px;top:764px;font-size:14px;letter-spacing:0.220px;">164</span>
<span class="t" style="left:897.00px;top:764px;font-size:14px;letter-spacing:0.220px;">63763</span>
<span class="t" style="left:1050.69px;top:764px;font-size:14px;letter-spacing:0.220px;">2.568</span>
<span class="t" style="left:338.24px;top:784px;font-size:12px;">14</span>
<span class="t" style="left:441.48px;top:786px;font-size:13.6px;letter-spacing:-0.450px;">Te</span>
<span class="t" style="left:535.86px;top:786px;font-size:13.6px;letter-spacing:-0.450px;">Lc2</span>
<span class="t" style="left:629.30px;top:785px;font-size:14px;letter-spacing:0.220px;">1</span>
<span class="t" style="left:763.02px;top:785px;font-size:14px;letter-spacing:0.220px;">166</span>
<span class="t" style="left:896.98px;top:785px;font-size:14px;letter-spacing:0.220px;">63765</span>
<span class="t" style="left:1050.69px;top:785px;font-size:14px;letter-spacing:0.220px;">2.568</span>
<span class="t" style="left:338.32px;top:805px;font-size:12px;">15</span>
<span class="t" style="left:441.48px;top:807px;font-size:13.6px;letter-spacing:-0.450px;">Te</span>
<span class="t" style="left:535.77px;top:807px;font-size:13.6px;letter-spacing:-0.450px;">Lc3</span>
<span class="t" style="left:629.30px;top:806px;font-size:14px;letter-spacing:0.220px;">1</span>
<span class="t" style="left:763.02px;top:806px;font-size:14px;letter-spacing:0.220px;">166</span>
<span class="t" style="left:896.98px;top:806px;font-size:14px;letter-spacing:0.220px;">63765</span>
<span class="t" style="left:1050.69px;top:806px;font-size:14px;letter-spacing:0.220px;">2.568</span>
<span class="t" style="left:338.33px;top:826px;font-size:12px;">16</span>
<span class="t" style="left:440.12px;top:828px;font-size:13.6px;letter-spacing:-0.450px;">Ba</span>
<span class="t" style="left:542.09px;top:828px;font-size:13.6px;letter-spacing:-0.450px;">Lb</span>
<span class="t" style="left:629.30px;top:827px;font-size:14px;letter-spacing:0.220px;">1</span>
<span class="t" style="left:763.02px;top:827px;font-size:14px;letter-spacing:0.220px;">186</span>
<span class="t" style="left:896.98px;top:827px;font-size:14px;letter-spacing:0.220px;">63785</span>
<span class="t" style="left:1050.69px;top:827px;font-size:14px;letter-spacing:0.220px;">2.568</span>
<span class="t" style="left:338.37px;top:847px;font-size:12px;">17</span>
<span class="t" style="left:440.88px;top:849px;font-size:13.6px;letter-spacing:-0.450px;">Ta</span>
<span class="t" style="left:535.09px;top:849px;font-size:13.6px;letter-spacing:-0.450px;">Lb2</span>
<span class="t" style="left:629.32px;top:848px;font-size:14px;letter-spacing:0.220px;">2</span>
<span class="t" style="left:762.81px;top:848px;font-size:14px;letter-spacing:0.220px;">204</span>
<span class="t" style="left:897.00px;top:848px;font-size:14px;letter-spacing:0.220px;">63803</span>
<span class="t" style="left:1050.75px;top:848px;font-size:14px;letter-spacing:0.220px;">2.569</span>
<span class="t" style="left:338.33px;top:868px;font-size:12px;">18</span>
<span class="t" style="left:448.67px;top:870px;font-size:13.6px;letter-spacing:-0.450px;">Ir</span>
<span class="t" style="left:542.41px;top:870px;font-size:13.6px;letter-spacing:-0.450px;">Ln</span>
<span class="t" style="left:629.32px;top:869px;font-size:14px;letter-spacing:0.220px;">2</span>
<span class="t" style="left:762.81px;top:869px;font-size:14px;letter-spacing:0.220px;">214</span>
<span class="t" style="left:897.00px;top:869px;font-size:14px;letter-spacing:0.220px;">63813</span>
<span class="t" style="left:1050.63px;top:869px;font-size:14px;letter-spacing:0.220px;">2.570</span>
<div style="position:absolute;left:331px;top:883px;width:867px;height:2px;background:#a6c3ea;"></div>
<div style="position:absolute;left:1179px;top:507px;width:1px;height:376px;background:#fafafa;"></div>
<div style="position:absolute;left:1180px;top:507px;width:16px;height:376px;background:linear-gradient(90deg,#ececec 0,#f1f1f1 50%,#f4f4f4 100%);"></div>
<svg class="a" style="left:1179px;top:507px" width="17" height="376" viewBox="0 0 17 376"><path d="M5.5 11.5l3.5-4 3.5 4z" fill="#505050"/><path d="M5.5 366l3.5 4 3.5-4z" fill="#404040"/><defs><linearGradient id="sg" x1="0" y1="0" x2="1" y2="0"><stop offset="0" stop-color="#f6f6f6"/><stop offset=".45" stop-color="#e6e6e6"/><stop offset=".55" stop-color="#d6d6d6"/><stop offset="1" stop-color="#c9c9c9"/></linearGradient></defs><rect x="1.5" y="29.5" width="14" height="74" rx="2" fill="url(#sg)" stroke="#979797"/><g stroke="#606060" stroke-width="1" shape-rendering="crispEdges"><path d="M5 63.5h7M5 66.5h7M5 69.5h7"/></g></svg>
</body></html>
